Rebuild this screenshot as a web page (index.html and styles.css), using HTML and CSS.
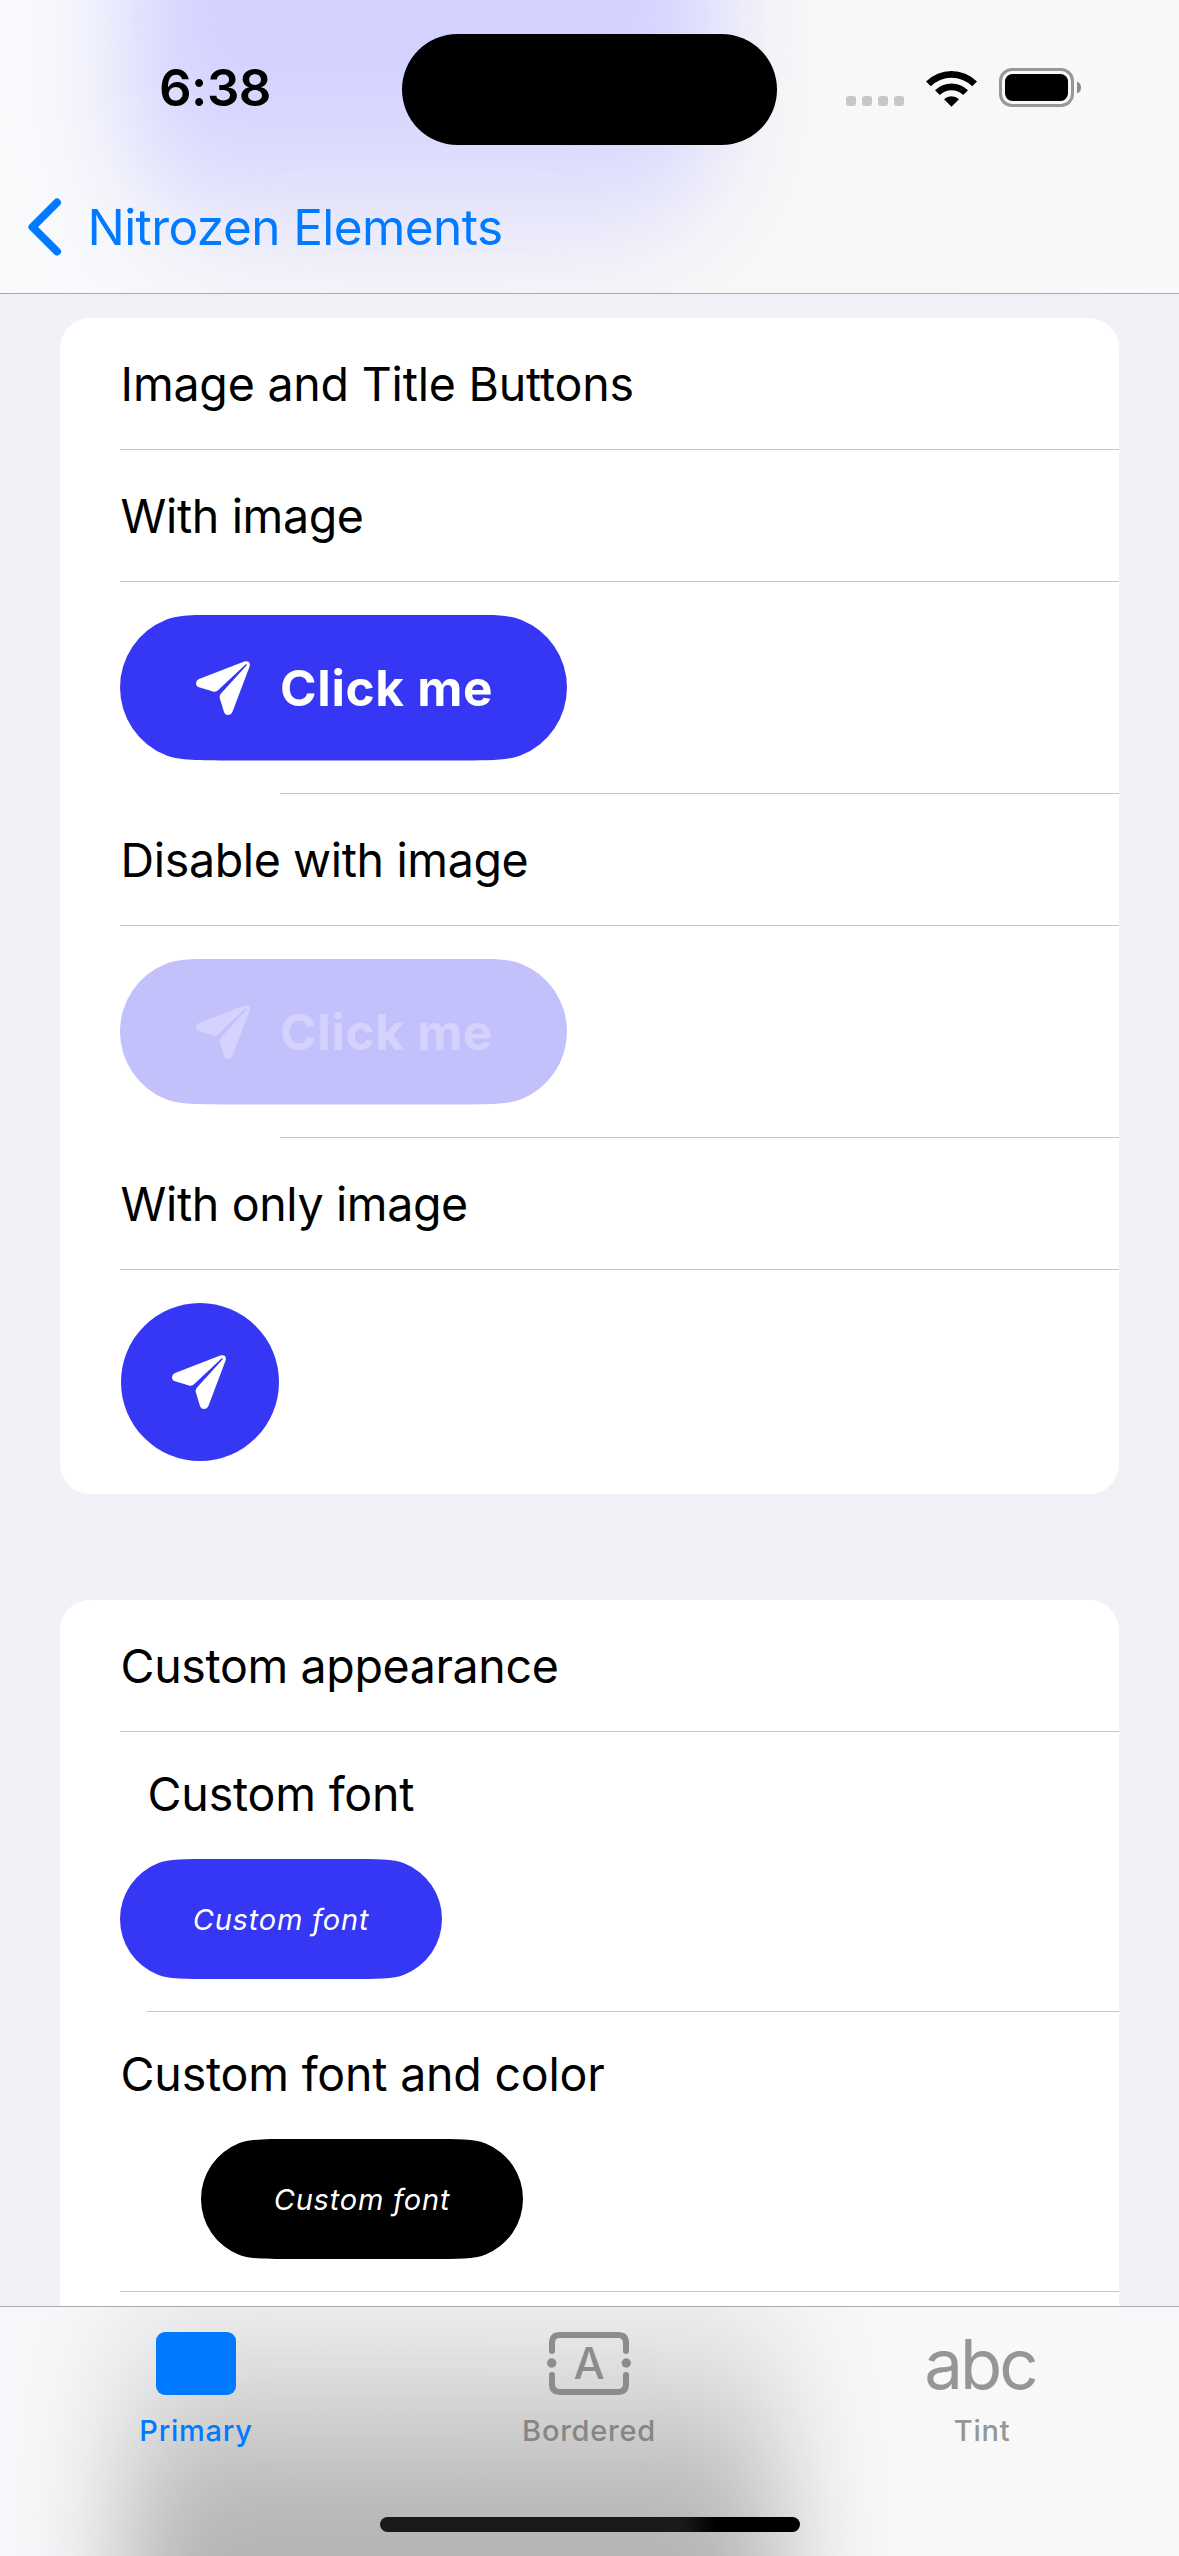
FILE: index.html
```html
<!DOCTYPE html>
<html lang="en">
<head>
<meta charset="utf-8">
<title>Nitrozen Elements</title>
<link rel="stylesheet" href="styles.css">
</head>
<body>
<svg class="defs" aria-hidden="true">
  <symbol id="paperplane" viewBox="0 0 54 54">
    <path fill="currentColor" d="M48.3 .4 3 18Q0 19.5 0 22.4 0 25.200 3 26.200L17 30.500Q20 31.200 22 29.200L49.500 3.400Q51.600 2.500 50.500 4.600L25 32.500Q23.200 34.500 23.800 37.300L28 51Q29 54 32 54 35 54 36.400 51L53.600 5.500Q55-.8 48.300.4Z"/>
  </symbol>
</svg>
<div class="screen">
  <header class="navbar">
    <div class="status">
      <div class="time">6:38</div>
      <div class="island"></div>
      <div class="indicators">
        <div class="signal"><i></i><i></i><i></i><i></i></div>
        <svg class="wifi" width="51" height="38" viewBox="0 0 51 38">
          <path d="M0 12.500A36 36 0 0 1 51 12.500L46.200 17.200A29.500 29.500 0 0 0 4.800 17.200Z"/>
          <path d="M9 21.300A23.500 23.500 0 0 1 42 21.300L37.200 26A17 17 0 0 0 13.800 26Z"/>
          <path d="M18 30.200A11 11 0 0 1 33 30.200L25.500 37.700Z"/>
        </svg>
        <svg class="battery" width="82" height="39" viewBox="0 0 82 39">
          <rect x="1.500" y="1.500" width="72" height="36" rx="11.500" fill="none" stroke="#979797" stroke-width="3"/>
          <rect x="6" y="6" width="63" height="27" rx="7.500"/>
          <path d="M78 13.500Q82 15 82 19.500T78 25.500Z" fill="#8b8b8b"/>
        </svg>
      </div>
    </div>
    <div class="back">
      <svg width="34" height="58" viewBox="0 0 34 58"><path d="M29 4.500 4.500 29 29 53.500" fill="none" stroke="#007aff" stroke-width="8" stroke-linecap="round" stroke-linejoin="round"/></svg>
      <span>Nitrozen Elements</span>
    </div>
  </header>

  <main class="content">
    <section class="card">
      <div class="row"><span class="wide">Image and Title Buttons</span></div>
      <div class="row"><span>With image</span></div>
      <div class="row tall inset-icon">
        <button class="pill"><svg class="plane"><use href="#paperplane"/></svg><span>Click me</span></button>
      </div>
      <div class="row"><span>Disable with image</span></div>
      <div class="row tall inset-icon">
        <button class="pill disabled" disabled><svg class="plane"><use href="#paperplane"/></svg><span>Click me</span></button>
      </div>
      <div class="row"><span>With only image</span></div>
      <div class="row round-row">
        <button class="round"><svg class="plane"><use href="#paperplane"/></svg></button>
      </div>
    </section>

    <section class="card">
      <div class="row"><span>Custom appearance</span></div>
      <div class="row stack inset-text">
        <span class="wide indent">Custom font</span>
        <button class="pill small">Custom font</button>
      </div>
      <div class="row stack">
        <span class="wide">Custom font and color</span>
        <button class="pill small dark">Custom font</button>
      </div>
    </section>
  </main>

  <nav class="tabbar">
    <div class="tabs">
      <a class="tab active">
        <svg width="80" height="63" viewBox="0 0 80 63"><rect width="80" height="63" rx="9" fill="currentColor"/></svg>
        <span>Primary</span>
      </a>
      <a class="tab">
        <svg width="84" height="63" viewBox="0 0 84 63">
          <g fill="none" stroke="#8b8c8b" stroke-width="6" stroke-linecap="round">
            <path d="M5 19V11Q5 3 13 3H71Q79 3 79 11V19"/>
            <path d="M5 43V52Q5 60 13 60H71Q79 60 79 52V43"/>
          </g>
          <circle cx="4.700" cy="31" r="4.700" fill="#8b8c8b"/>
          <circle cx="79.300" cy="31" r="4.700" fill="#8b8c8b"/>
          <text class="glyph" x="42" y="47" text-anchor="middle">A</text>
        </svg>
        <span>Bordered</span>
      </a>
      <a class="tab light">
        <span class="abc">abc</span>
        <span>Tint</span>
      </a>
    </div>
    <div class="home"></div>
  </nav>
</div>
</body>
</html>
```
FILE: styles.css
```css
* { box-sizing: border-box; }
body { margin: 0; }
.defs { display: none; }

.screen {
  width: 1179px;
  height: 2556px;
  display: flex;
  flex-direction: column;
  overflow: hidden;
  background: #f2f1f7;
  color: #000;
  font-family: Inter, "Liberation Sans", sans-serif;
}

/* Navigation bar */
.navbar {
  position: relative;
  isolation: isolate;
  flex: none;
  height: 294px;
  overflow: hidden;
  border-bottom: 1px solid #a9a8ad;
  background: linear-gradient(90deg, #f9fafc, #f8f8f8 30%, #f8f8f8 78%, #f9f9fc);
}
.navbar::before {
  content: "";
  position: absolute;
  z-index: -1;
  left: 128px;
  top: -200px;
  width: 590px;
  height: 510px;
  border-radius: 0 0 200px 200px;
  background: linear-gradient(#d3d2ff 270px, #d3d2ffd8 345px, #d3d2ff88 400px, #d3d2ff40 450px, #d3d2ff00 510px);
  filter: blur(50px);
}
.status {
  height: 177px;
  display: grid;
  grid-template-columns: 402px 375px 1fr;
  align-items: start;
}
.time {
  padding: 58px 0 0 159px;
  font-size: 51px;
  line-height: 60px;
  font-weight: 600;
  letter-spacing: -0.5px;
}
.island {
  height: 111px;
  margin-top: 33.5px;
  border-radius: 56px;
  background: #000;
}
.indicators {
  display: flex;
  align-items: flex-end;
  height: 107px;
  padding-left: 69px;
}
.signal {
  display: flex;
  flex: none;
  gap: 6px;
  width: 58px;
  margin: 0 20px 1px 0;
}
.signal i { width: 10px; height: 10px; border-radius: 3px; background: #c7c7c7; }
.wifi { margin-left: 2px; flex: none; }
.battery { margin-left: 22px; flex: none; }
.back {
  display: flex;
  align-items: center;
  gap: 25.5px;
  height: 100px;
  padding-left: 28px;
  color: #007aff;
  font-size: 49.5px;
  letter-spacing: -0.58px;
}

/* Grouped list */
.content {
  flex: 1;
  min-height: 0;
  overflow: hidden;
  display: flex;
  flex-direction: column;
  gap: 106px;
  padding: 24px 60px 0;
}
.card {
  flex: none;
  padding-left: 60px;
  border-radius: 30px;
  background: #fff;
}
.card:last-child { height: 760px; }
.row {
  height: 132px;
  display: flex;
  align-items: center;
  border-bottom: 1px solid transparent;
  border-image: linear-gradient(#c6c6c8, #c6c6c8) 0 0 1 0;
  font-size: 46.5px;
  line-height: 60px;
  letter-spacing: -0.36px;
  white-space: nowrap;
}
.row > span { padding-left: 0.6px; }
.wide { letter-spacing: -0.2px; }
.tall { height: 212px; }
.inset-icon { border-image: linear-gradient(90deg, transparent 160px, #c6c6c8 160px) 0 0 1 0; }
.round-row { height: 224px; padding-left: 1px; border: 0; border-image: none; }
.stack {
  height: 280px;
  flex-direction: column;
  align-items: flex-start;
  padding-top: 32px;
}
.row > .indent { padding-left: 27.6px; }
.inset-text { border-image: linear-gradient(90deg, transparent 27px, #c6c6c8 27px) 0 0 1 0; }

/* Buttons */
button { border: 0; margin: 0; padding: 0; font-family: inherit; }
.pill {
  width: 447px;
  height: 146px;
  display: flex;
  align-items: center;
  gap: 30px;
  padding-left: 76px;
  background: #3636f5;
  color: #fff;
  font-size: 49.5px;
  font-weight: 700;
  letter-spacing: 0.7px;
  clip-path: path("M111.600 0H335.400C367.500 0 387.900 0 400.900 5.140A73 73 0 0 1 400.900 140.860C387.900 146 367.500 146 335.400 146H111.600C79.500 146 59.100 146 46.100 140.860A73 73 0 0 1 46.100 5.140C59.100 0 79.500 0 111.600 0Z");
}
.plane { width: 54px; height: 54px; flex: none; }
.disabled { background: #c2c1fb; color: #d5d3fe; }
.round {
  width: 158px;
  height: 158px;
  display: flex;
  align-items: center;
  justify-content: center;
  padding-right: 2px;
  border-radius: 50%;
  background: #3636f5;
  color: #fff;
}
.small {
  width: 322px;
  height: 120px;
  margin-top: 35px;
  padding: 0;
  justify-content: center;
  font-size: 29px;
  font-style: italic;
  font-weight: 400;
  letter-spacing: 0.8px;
  clip-path: path("M91.700 0H230.300C256.700 0 273.500 0 284.100 4.220A60 60 0 0 1 284.100 115.780C273.500 120 256.700 120 230.300 120H91.700C65.300 120 48.500 120 37.900 115.780A60 60 0 0 1 37.900 4.220C48.500 0 65.300 0 91.700 0Z");
}
.dark { margin-left: 81px; background: #000; }

/* Tab bar */
.tabbar {
  position: relative;
  isolation: isolate;
  flex: none;
  height: 250px;
  overflow: hidden;
  display: flex;
  flex-direction: column;
  align-items: center;
  border-top: 1px solid #a9a9ab;
  background: linear-gradient(90deg, #f7f8fb, #f7f7f7 30%, #f8f8f8 78%, #f8f8fb);
}
.tabbar::before {
  content: "";
  position: absolute;
  z-index: -1;
  left: 126px;
  top: -60px;
  width: 654px;
  height: 560px;
  background: linear-gradient(#b1b1b110 0, #b1b1b122 70px, #b1b1b170 145px, #b1b1b1b8 205px, #b1b1b1e8 265px, #b1b1b1 310px);
  filter: blur(54px);
}
.tabs {
  width: 100%;
  height: 210px;
  display: grid;
  grid-template-columns: repeat(3, 1fr);
}
.tab {
  display: flex;
  flex-direction: column;
  align-items: center;
  gap: 18px;
  padding: 25px 1px 0 0;
  color: #858685;
  font-size: 29px;
  line-height: 36px;
  font-weight: 500;
  letter-spacing: 0.75px;
}
.active { color: #007aff; }
.light { color: #959695; }
.glyph { font-size: 44px; font-weight: 500; fill: #8b8c8b; letter-spacing: 0; }
.abc {
  height: 63px;
  padding: 1px 4px 0 0;
  font-size: 69px;
  line-height: 63px;
  font-weight: 400;
  letter-spacing: -3px;
}
.home {
  width: 420px;
  height: 15px;
  border-radius: 8px;
  background: linear-gradient(90deg, #1a1a1a 72%, #000 80%);
}
```
